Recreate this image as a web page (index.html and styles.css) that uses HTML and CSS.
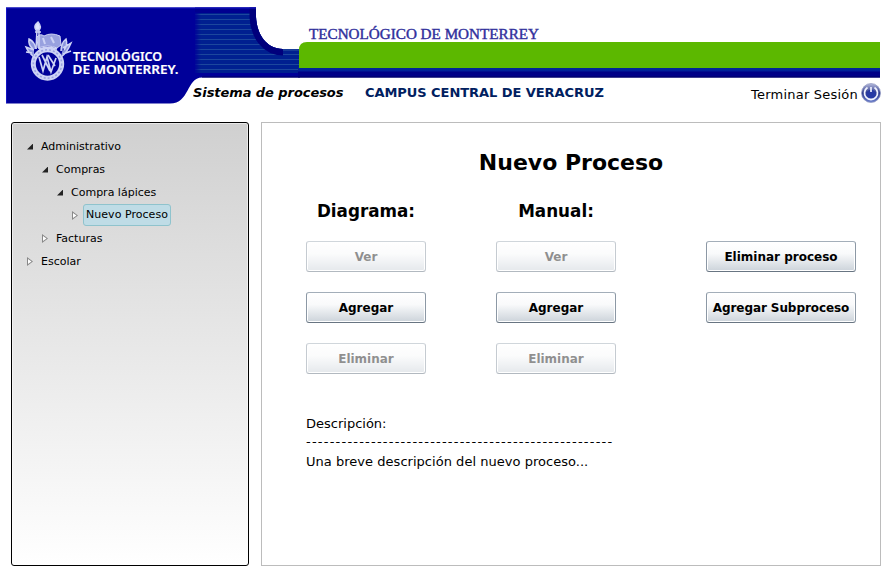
FILE: index.html
```html
<!DOCTYPE html>
<html lang="es">
<head>
<meta charset="utf-8">
<title>Sistema de procesos</title>
<link rel="stylesheet" href="styles.css">
</head>
<body>
<header class="header">
  <svg class="banner" width="875" height="97" viewBox="6 7 875 97" role="img" aria-label="Tecnológico de Monterrey">
    <defs>
      <pattern id="lines" width="8" height="5" y="4" patternUnits="userSpaceOnUse">
        <rect width="8" height="5" fill="#002090"/>
        <rect width="8" height="1" fill="#1c479c"/>
      </pattern>
      <clipPath id="body"><path d="M6 7.500H256V17C257 35 267 49 283 49H300V77.500H202C186 78 190 103.500 170 103.500H6Z"/></clipPath>
      <linearGradient id="fade"><stop offset="0" stop-color="#000099"/><stop offset="1" stop-color="#000099" stop-opacity="0"/></linearGradient>
      <linearGradient id="bar" x2="0" y2="1"><stop offset="0" stop-color="#002a91"/><stop offset=".35" stop-color="#00209a"/><stop offset=".5" stop-color="#000085"/><stop offset="1" stop-color="#00008a"/></linearGradient>
    </defs>
    <g clip-path="url(#body)">
      <path d="M6 7H300V104H6Z" fill="#000099"/>
      <path d="M195 13H300V73H195Z" fill="url(#lines)"/>
      <path d="M195 7H256V13H195Z" fill="#000090"/>
      <rect x="194" y="12" width="7" height="61" fill="url(#fade)"/>
      <path d="M256 7V17C257 35 267 49 283 49" fill="none" stroke="#00007c" stroke-width="13"/>
    </g>
    <rect x="283" y="49" width="16" height="2" fill="#173c98"/>
    <rect x="298" y="67" width="582" height="10.500" fill="url(#bar)"/>
    <path d="M202 77H880" stroke="#000060"/>
    <path d="M299 68V50Q299 42 307 42H880V68Z" fill="#5cb800"/>
    <path d="M6 8H256M6.500 8V103" stroke="#1414c4" fill="none"/>
    <g fill="none" stroke="#cdd3f5">
      <circle cx="47.500" cy="64" r="14.200" stroke-width="5"/>
      <circle cx="47.500" cy="64" r="14.200" stroke="#99a1e0" stroke-width="1.500" stroke-dasharray="2 2"/>
      <path d="M39 57L43 71L47 57L51 72L56 58M42 55L50 71M48 55L55 66" stroke-width="1.700"/>
      <path d="M37 37Q40 33 44 36Q51 32 60 36L61 45L57 48Q48 44 38 48Z" fill="#98a1df"/>
      <path d="M39 49Q48 46 57 49M43 38L45 44M51 37L54 43" stroke-width="2"/>
      <path d="M36 49L37 29M39 49V29M35 32H41M36 30Q33 26 38 22Q42 27 39 30Z" fill="#dfe4ff" stroke-width="1.500"/>
      <path d="M34 57Q28 52 26 47L34 50M33 49Q28 45 29 39Q35 42 36 49M32 53L26 52M61 57Q67 53 71 43L63 48M61 51Q61 43 66 39Q68 45 64 50M63 54L71 51" fill="#8d97dd" stroke-width="1.500"/>
    </g>
    <g class="logo-text">
      <text x="73" y="60.500" textLength="89" lengthAdjust="spacingAndGlyphs">TECNOLÓGICO</text>
      <text x="72.500" y="73.500" textLength="106" lengthAdjust="spacingAndGlyphs">DE MONTERREY.</text>
    </g>
    <text class="tagline" x="309" y="39" textLength="230" lengthAdjust="spacingAndGlyphs">TECNOLÓGICO DE MONTERREY</text>
  </svg>
  <div class="header-info">
    <span class="system">Sistema de procesos</span>
    <span class="campus">CAMPUS CENTRAL DE VERACRUZ</span>
    <a class="logout"><span>Terminar Sesión</span>
      <svg width="20" height="20" viewBox="0 0 20 20">
        <defs><linearGradient id="orb" x2="0" y2="1"><stop offset="0" stop-color="#b8bddd"/><stop offset=".5" stop-color="#2b388c"/><stop offset="1" stop-color="#6f83cf"/></linearGradient></defs>
        <circle cx="10" cy="10" r="9.500" fill="url(#orb)" stroke="#8f96c0" stroke-width=".7"/>
        <path d="M6.500 4.500A6.500 6.500 0 1 0 13.500 4.500" fill="none" stroke="#f2f4ff" stroke-width="1.800"/>
        <ellipse cx="10" cy="11" rx="4.800" ry="4.300" fill="#273aa4"/>
        <path d="M10 4V9" stroke="#e4e8fa" stroke-width="1.800"/>
      </svg>
    </a>
  </div>
</header>
<main class="layout">
  <nav class="tree">
    <div class="node"><i class="arrow open"></i><span>Administrativo</span></div>
    <div class="node l2"><i class="arrow open"></i><span>Compras</span></div>
    <div class="node l3"><i class="arrow open"></i><span>Compra lápices</span></div>
    <div class="node l4"><i class="arrow closed"></i><span class="selected">Nuevo Proceso</span></div>
    <div class="node l2"><i class="arrow closed"></i><span>Facturas</span></div>
    <div class="node"><i class="arrow closed"></i><span>Escolar</span></div>
  </nav>
  <section class="panel">
    <h1>Nuevo Proceso</h1>
    <div class="columns">
      <div class="column">
        <h2>Diagrama:</h2>
        <button disabled>Ver</button><button>Agregar</button><button disabled>Eliminar</button>
      </div>
      <div class="column">
        <h2>Manual:</h2>
        <button disabled>Ver</button><button>Agregar</button><button disabled>Eliminar</button>
      </div>
      <div class="column wide">
        <button>Eliminar proceso</button><button class="tight">Agregar Subproceso</button>
      </div>
    </div>
    <div class="description">
      <p>Descripción:</p>
      <p class="dashes">----------------------------------------------------</p>
      <p class="detail">Una breve descripción del nuevo proceso...</p>
    </div>
  </section>
</main>
</body>
</html>
```
FILE: styles.css
```css
* { box-sizing: border-box; }
body { margin: 0; background: #fff; color: #000; font-family: "DejaVu Sans", sans-serif; }
.header { position: relative; height: 122px; padding: 7px 0 0 6px; }
.banner { display: block; }
.logo-text { font: 600 12.5px "Noto Sans", sans-serif; fill: #fff; stroke: #fff; stroke-width: .2; }
.tagline { font: 14.5px "Liberation Serif", serif; fill: #302f9c; stroke: #302f9c; stroke-width: .4; }
.header-info { position: absolute; left: 193px; right: 8px; top: 83px; height: 20px; display: flex; align-items: center; white-space: nowrap; font-size: 13px; }
.system { width: 172px; padding-bottom: 2px; font-weight: bold; font-style: italic; letter-spacing: -.07px; }
.campus { padding-bottom: 2px; font-weight: bold; color: #00205f; letter-spacing: -.06px; }
.logout { margin-left: auto; display: flex; align-items: center; gap: 3px; letter-spacing: .22px; }
.logout span { padding-top: 2px; }
.layout { display: flex; gap: 12px; margin-left: 11px; height: 444px; }
.tree { width: 238px; border: 1px solid #000; border-radius: 3px; padding: 12px 0 0 14px; background: linear-gradient(#d0d0d0, #fff); box-shadow: inset 0 0 0 1px #ffffff80; font-size: 11px; }
.node { display: flex; align-items: center; height: 23px; white-space: nowrap; }
.l2 { padding-left: 15px; }
.l3 { padding-left: 30px; }
.l4 { padding-left: 45px; }
.arrow { width: 6px; height: 9px; margin: 0 8px 0 1px; flex: none; }
.open { height: 6px; background: #222; clip-path: polygon(100% 0, 100% 100%, 0 100%); }
.closed { background: #888; clip-path: polygon(0 0, 100% 50%, 0 100%); position: relative; }
.closed::after { content: ""; position: absolute; inset: 0; background: #fff; clip-path: polygon(1px 2px, 4.5px 50%, 1px 7px); }
.selected { height: 22px; line-height: 19px; margin-left: -3px; padding: 0 2px; border: 1px solid #8fc3cd; border-radius: 3px; background: #bfdce6; letter-spacing: .04px; width: 88px; margin-top: -1px; }
.panel { width: 620px; border: 1px solid #bcbcbc; padding: 0 24px 0 44px; }
h1 { margin: 25px 0 0; height: 29px; font-size: 22px; line-height: 29px; text-align: center; padding-right: 20px; }
.columns { display: flex; margin-top: 24px; }
.column { width: 120px; margin-right: 70px; display: flex; flex-direction: column; gap: 20px; }
.column.wide { width: 150px; margin: 40px 0 0 20px; }
h2 { margin: 0; height: 20px; font-size: 16.8px; line-height: 21px; text-align: center; }
button { height: 31px; padding: 0; border: 1px solid; border-color: #a3aeb9 #8c98a5 #687582; border-radius: 3px; background: linear-gradient(#fff 0%, #f9fafb 40%, #ccd3da 100%); box-shadow: inset 0 0 0 1px #fff; color: #000; font: bold 12px "DejaVu Sans", sans-serif; white-space: nowrap; }
button.tight { letter-spacing: -.08px; }
button:disabled { opacity: .5; color: #222; }
.description { margin-top: 40px; font-size: 13px; line-height: 19px; white-space: nowrap; }
.description p { margin: 0; }
.description .dashes { margin: -1px 0 1px; letter-spacing: 1.22px; }
.detail { letter-spacing: .03px; }
```
